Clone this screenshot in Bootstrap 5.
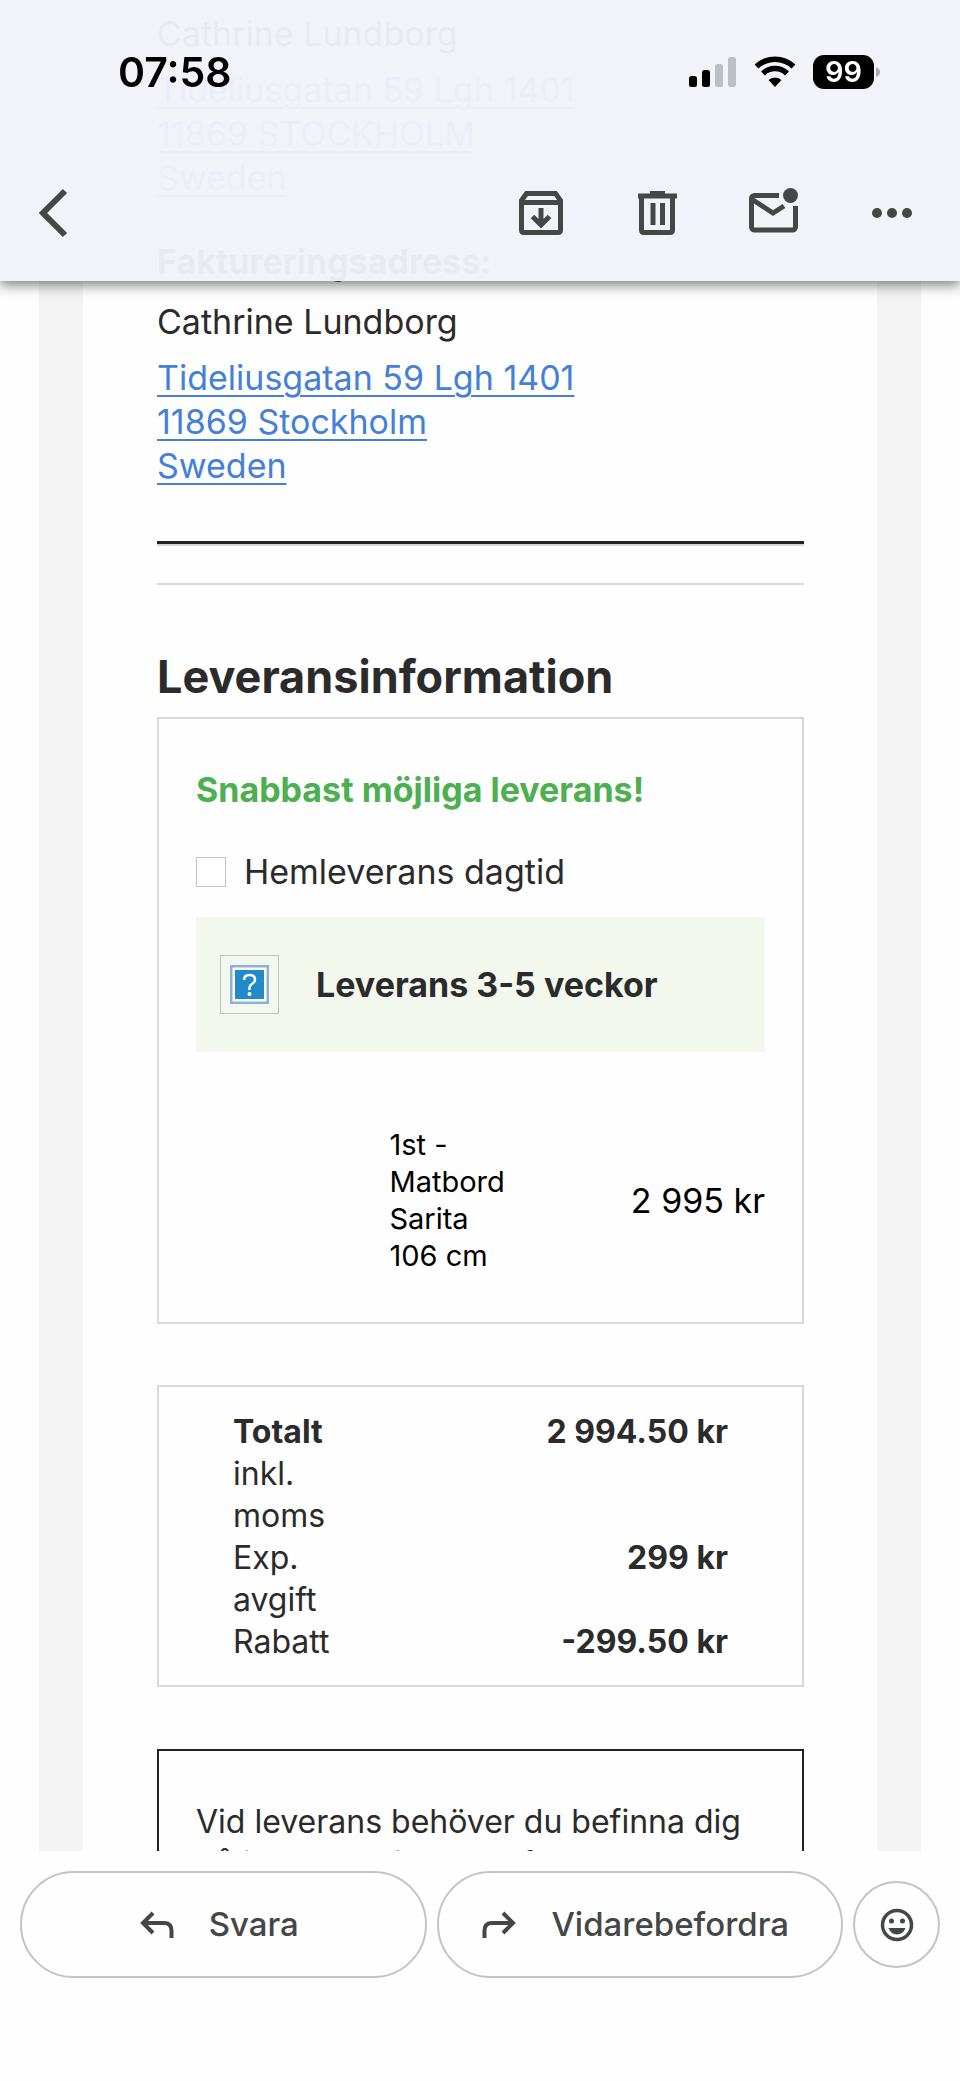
<!DOCTYPE html>
<html lang="sv">
<head>
<meta charset="utf-8">
<meta name="viewport" content="width=device-width, initial-scale=1">
<title>Orderbekräftelse</title>
<link href="https://cdn.jsdelivr.net/npm/bootstrap@5.3.0/dist/css/bootstrap.min.css" rel="stylesheet">
<style>
  body { font-family: Inter, "Liberation Sans", sans-serif; font-size: 34px; line-height: 44px; color: #2b2b2b; background: #fefefe; }
  svg { display: block; }
  .mail-head { background: rgba(240, 243, 249, .96); box-shadow: 0 4px 12px rgba(0, 0, 0, .5); color: #444746; }
  .status-row { height: 144px; padding: 0 80px 0 118px; color: #000; }
  .clock { font-size: 41px; font-weight: 600; }
  .cell-icons { gap: 17px; }
  .battery { font-size: 29px; font-weight: 600; line-height: 34px; width: 61px; border-radius: 11px; background: #000; color: #fff; }
  .tool-row { height: 137px; padding: 0 38px 0 32px; }
  .tool-row .btn, .reply-row .btn { color: #444746; }
  .tool-gap { gap: 57px; }
  .mail-scroll { min-height: 0; padding: 0 39px; }
  .mail-frame { border: solid #f4f4f4; border-width: 0 44px; padding: 12px 73px 0 74px; }
  .mail-frame a { color: #4480d8; text-decoration-thickness: 2px; text-underline-offset: 5px; }
  .addr { margin: 12px 0 0; }
  .addr-title { font-weight: 700; margin: 40px 0 16px; }
  .rule-dark { height: 5px; background: #d5d5d5; border-top: 3px solid #222; margin-top: 53px; }
  .rule-light { height: 2px; background: #d8d8d8; margin-top: 37px; }
  .sect-title { font-size: 45px; font-weight: 700; line-height: 56px; margin: 64px 0 12px; }
  .box { border: 2px solid #d9d9d9; }
  .ship-box { padding: 49px 37px 48px; }
  .ok-line { color: #4caf50; font-weight: 700; }
  .pick-row { margin-top: 38px; }
  .pick-row label { padding-left: 18px; }
  .form-check-input.pick { width: 30px; height: 30px; border: 1px solid #c4c4c4; border-radius: 0; margin: 0; background: #fff; }
  .eta { background: #f2f8ee; padding: 0 24px; height: 135px; gap: 36px; margin-top: 23px; font-weight: 700; }
  .goods { font-size: 29px; line-height: 37px; color: #000; margin: 74px 0 0; }
  .goods td { padding: 0; }
  .goods .thumb { width: 34%; }
  .goods .cost { font-size: 34px; }
  .sum-box { padding: 24px 74px 22px; margin-top: 61px; font-size: 32px; line-height: 42px; }
  .sum-box td { padding: 0; vertical-align: top; }
  .note-box { border: 2px solid #222; margin-top: 62px; padding: 50px 37px; font-size: 32px; line-height: 42px; }
  .reply-row { padding: 20px 20px 103px; gap: 10px; }
  .reply-row .btn { border: 2px solid #c4c4c4; font-size: 33px; font-weight: 500; }
  .reply-row .pill { height: 107px; gap: 35px; padding: 0 16px 0 8px; }
  .round { width: 87px; height: 87px; }
</style>
</head>
<body class="vh-100 d-flex flex-column overflow-hidden">
<header class="mail-head fixed-top">
  <div class="status-row d-flex align-items-center justify-content-between">
    <span class="clock">07:58</span>
    <div class="cell-icons d-flex align-items-center">
      <svg width="48" height="32" viewBox="0 0 48 32" aria-hidden="true"><rect x="0" y="20" width="8" height="11" rx="2.500"/><rect x="13" y="14" width="8" height="17" rx="2.500"/><g fill="#bcc0c4"><rect x="26" y="8" width="8" height="23" rx="2.500"/><rect x="39" y="1" width="8" height="30" rx="2.500"/></g></svg>
      <svg width="42" height="32" viewBox="0 0 42 32" aria-hidden="true"><g fill="none" stroke="#000" stroke-width="5.500"><path d="M2.500 10.500a27 27 0 0 1 37 0"/><path d="M9 17.500a17 17 0 0 1 24 0"/></g><path d="M14.500 24a9.500 9.500 0 0 1 13 0L21 31z"/></svg>
      <div class="d-flex align-items-center"><span class="battery text-center">99</span><svg width="6" height="12" viewBox="0 0 6 12" aria-hidden="true"><path fill="#a9abae" d="M2 1q4 1.500 4 5t-4 5z"/></svg></div>
    </div>
  </div>
  <nav class="tool-row d-flex align-items-center justify-content-between">
    <button class="btn p-0 border-0" aria-label="Tillbaka"><svg width="44" height="60" viewBox="0 0 44 60" fill="none" stroke="currentColor" stroke-width="6"><path d="M33 8 11 30l22 22"/></svg></button>
    <div class="tool-gap d-flex">
      <button class="btn p-0 border-0" aria-label="Arkivera"><svg width="60" height="60" viewBox="0 0 60 60" fill="none" stroke="currentColor" stroke-width="5"><path d="M10.500 17.500 15.500 10.500h29l5 7v30a2 2 0 0 1-2 2h-35a2 2 0 0 1-2-2zM10.500 19.500h39M30 25v17M21.500 33.500 30 42l8.500-8.500"/></svg></button>
      <button class="btn p-0 border-0" aria-label="Ta bort"><svg width="60" height="60" viewBox="0 0 60 60" fill="none" stroke="currentColor" stroke-width="5"><path d="M13.500 13v34.500a2 2 0 0 0 2 2h27a2 2 0 0 0 2-2V13M10 13h39M22 10.500h15M25 20v22M34.500 20v22"/></svg></button>
      <button class="btn p-0 border-0" aria-label="Markera som oläst"><svg width="60" height="60" viewBox="0 0 60 60" fill="none" stroke="currentColor" stroke-width="5"><path d="M34 12.500H9.500a3 3 0 0 0-3 3v28.500a3 3 0 0 0 3 3h38a3 3 0 0 0 3-3V23M6.500 16 28 30l11-7"/><circle cx="45.500" cy="12.500" r="7.500" fill="currentColor" stroke="none"/></svg></button>
      <button class="btn p-0 border-0" aria-label="Mer"><svg width="60" height="60" viewBox="0 0 60 60" fill="currentColor"><circle cx="15" cy="30" r="5"/><circle cx="30" cy="30" r="5"/><circle cx="45" cy="30" r="5"/></svg></button>
    </div>
  </nav>
</header>

<main class="mail-scroll flex-grow-1 overflow-hidden">
  <div class="mail-frame">
    <div>Cathrine Lundborg</div>
    <p class="addr"><a href="#">Tideliusgatan 59 Lgh 1401<br>11869 STOCKHOLM<br>Sweden</a></p>
    <div class="addr-title">Faktureringsadress:</div>
    <div>Cathrine Lundborg</div>
    <p class="addr"><a href="#">Tideliusgatan 59 Lgh 1401<br>11869 Stockholm<br>Sweden</a></p>
    <div class="rule-dark"></div>
    <div class="rule-light"></div>

    <h2 class="sect-title">Leveransinformation</h2>
    <section class="box ship-box">
      <div class="ok-line">Snabbast möjliga leverans!</div>
      <div class="pick-row d-flex align-items-center">
        <input class="form-check-input pick" type="checkbox" id="home">
        <label for="home">Hemleverans dagtid</label>
      </div>
      <div class="eta d-flex align-items-center">
        <svg width="60" height="60" viewBox="0 0 60 60" role="img" aria-label="Bild saknas"><rect x=".5" y=".5" width="58" height="58" fill="none" stroke="#bcc5bb"/><rect x="10" y="10" width="39" height="39" fill="#8eb0d8"/><rect x="12.500" y="12.500" width="34" height="34" fill="#fff"/><rect x="15" y="15" width="29" height="29" fill="#2289cb"/><path d="M24 25q0-5 5.500-5t5.500 4.500q0 3-3 4.500t-2.500 6" fill="none" stroke="#fff" stroke-width="2.500"/><circle cx="29.500" cy="39" r="2" fill="#fff"/></svg>
        <span>Leverans 3-5 veckor</span>
      </div>
      <table class="goods w-100">
        <tr><td class="thumb"></td><td>1st -<br>Matbord<br>Sarita<br>106 cm</td><td class="cost text-end">2 995 kr</td></tr>
      </table>
    </section>

    <section class="box sum-box">
      <table class="w-100">
        <tr><td><b>Totalt</b><br>inkl.<br>moms</td><td class="text-end fw-bold">2 994.50 kr</td></tr>
        <tr><td>Exp.<br>avgift</td><td class="text-end fw-bold">299 kr</td></tr>
        <tr><td>Rabatt</td><td class="text-end fw-bold">-299.50 kr</td></tr>
      </table>
    </section>

    <section class="note-box">Vid leverans behöver du befinna dig på innergata i en zon för</section>
  </div>
</main>

<footer class="reply-row d-flex align-items-center">
  <button class="btn pill rounded-pill d-flex align-items-center justify-content-center flex-fill w-50"><svg width="34" height="28" viewBox="0 0 34 28" fill="none" stroke="currentColor" stroke-width="4"><path d="M13 2 3 12l10 10M3 12h21q7.500 0 7.500 7.500V27"/></svg>Svara</button>
  <button class="btn pill rounded-pill d-flex align-items-center justify-content-center flex-fill w-50"><svg width="34" height="28" viewBox="0 0 34 28" fill="none" stroke="currentColor" stroke-width="4"><path d="m21 2 10 10-10 10M31 12H10q-7.500 0-7.500 7.500V27"/></svg>Vidarebefordra</button>
  <button class="btn round rounded-circle d-flex align-items-center justify-content-center p-0 flex-shrink-0" aria-label="Lägg till reaktion"><svg width="34" height="34" viewBox="0 0 34 34" fill="currentColor"><circle cx="17" cy="17" r="14.500" fill="none" stroke="currentColor" stroke-width="3.500"/><circle cx="11.500" cy="13" r="2.500"/><circle cx="22.500" cy="13" r="2.500"/><path d="M8.500 20h17q-2.500 6.500-8.500 6.500T8.500 20z"/></svg></button>
</footer>
<script src="https://cdn.jsdelivr.net/npm/bootstrap@5.3.0/dist/js/bootstrap.bundle.min.js"></script>
</body>
</html>
